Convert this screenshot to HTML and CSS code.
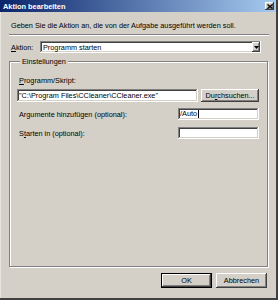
FILE: index.html
```html
<!DOCTYPE html>
<html lang="de">
<head>
    <meta charset="UTF-8">
    <meta name="viewport" content="width=device-width, initial-scale=1.0">
    <title>Aktion bearbeiten</title>
    <link rel="stylesheet" href="styles.css">
</head>
<body>

    <div class="window">
        <div class="titlebar">
            <span class="title">Aktion bearbeiten</span>
            <button class="close" aria-label="Schließen">
                <svg width="6" height="5" viewBox="0 0 6 5">
                    <path d="M0.5 0.5 L5.5 4.5 M5.5 0.5 L0.5 4.5" stroke="#000" stroke-width="1.3" fill="none"/>
                </svg>
            </button>
        </div>

        <div class="content">
            <p class="intro">Geben Sie die Aktion an, die von der Aufgabe ausgeführt werden soll.</p>
            <div class="separator"></div>

            <div class="action-row">
                <label class="action-label"><u>A</u>ktion:</label>
                <div class="combo">
                    <span class="combo-text">Programm starten</span>
                    <span class="drop">
                        <svg width="5" height="3" viewBox="0 0 5 3"><path d="M0 0 H5 L2.5 3 Z" fill="#000"/></svg>
                    </span>
                </div>
            </div>

            <fieldset class="group">
                <legend>Einstellungen</legend>

                <label class="prog-label"><u>P</u>rogramm/Skript:</label>
                <div class="prog-row">
                    <div class="field wide">"C:\Program Files\CCleaner\CCleaner.exe"</div>
                    <button class="btn browse">Du<u>r</u>chsuchen...</button>
                </div>

                <div class="opt-row">
                    <label>Ar<u>g</u>umente hinzufügen (optional):</label>
                    <div class="field narrow">/Auto<span class="caret"></span></div>
                </div>

                <div class="opt-row second">
                    <label>S<u>t</u>arten in (optional):</label>
                    <div class="field narrow"></div>
                </div>
            </fieldset>

            <div class="footer">
                <button class="btn default">OK</button>
                <button class="btn">Abbrechen</button>
            </div>
        </div>
    </div>

</body>
</html>
```

FILE: styles.css
```css
body {
    margin: 0;
    font-family: "Liberation Sans", Arial, sans-serif;
    font-size: 7.3px;
    line-height: 9px;
    color: #000;
    background: #d4d0c8;
}

.window {
    width: 278px;
    height: 300px;
    box-sizing: border-box;
    display: flex;
    flex-direction: column;
    background: #d4d0c8;
    border-right: 2px solid #404040;
    border-bottom: 2px solid #404040;
    box-shadow: inset 1px 0 #e6e4df;
}

/* title bar */
.titlebar {
    height: 12px;
    display: flex;
    align-items: center;
    justify-content: space-between;
    padding: 0 2px 0 3px;
    background: linear-gradient(to right, #0a246a, #a6caf0);
}

.title {
    color: #fff;
    font-weight: bold;
    font-size: 7.4px;
    line-height: 12px;
    padding-top: 1px;
}

.close {
    width: 9px;
    height: 8px;
    padding: 0;
    border: none;
    display: flex;
    align-items: center;
    justify-content: center;
    background: #d4d0c8;
    box-shadow: inset -1px -1px #404040, inset 1px 1px #fff, inset -2px -2px #808080;
}

/* dialog body */
.content {
    flex: 1;
    display: flex;
    flex-direction: column;
    padding: 0 7px 10px 9px;
}

.intro {
    margin: 9px 0 0 2px;
}

.separator {
    margin-top: 4px;
    border-top: 1px solid #808080;
    border-bottom: 1px solid #fff;
}

.action-row {
    margin-top: 5px;
    height: 12px;
    display: flex;
    align-items: center;
}

.action-label {
    width: 29px;
    padding-left: 2px;
}

.combo {
    width: 221px;
    height: 12px;
    box-sizing: border-box;
    display: flex;
    align-items: center;
    justify-content: space-between;
    padding: 0 1px 0 3px;
    background: #fff;
    box-shadow: inset -1px -1px #fff, inset 1px 1px #808080, inset -2px -2px #d4d0c8, inset 2px 2px #404040;
}

.drop {
    width: 8px;
    height: 10px;
    display: flex;
    align-items: center;
    justify-content: center;
    background: #d4d0c8;
    box-shadow: inset -1px -1px #404040, inset 1px 1px #fff, inset -2px -2px #808080;
}

/* group box */
.group {
    flex: 1;
    margin: 4px 0 0 0;
    padding: 10px 8px 0 7px;
    min-width: 0;
    border: 1px solid #808080;
    box-shadow: 1px 1px 0 #fff, inset 1px 1px 0 #fff;
    width: 259px;
    box-sizing: border-box;
}

.group legend {
    margin-left: 3px;
    padding: 0 2px;
    color: #000;
    background: #d4d0c8;
}

.prog-label {
    display: block;
    padding-left: 2px;
}

.prog-row {
    margin-top: 4px;
    display: flex;
    gap: 3px;
}

.field {
    height: 12px;
    box-sizing: border-box;
    padding: 2px 0 0 2px;
    line-height: 8px;
    white-space: nowrap;
    background: #fff;
    box-shadow: inset -1px -1px #fff, inset 1px 1px #808080, inset -2px -2px #d4d0c8, inset 2px 2px #404040;
}

.field.wide {
    width: 182px;
    height: 13px;
    padding-top: 3px;
}

.field.narrow {
    width: 81px;
}

.caret {
    display: inline-block;
    width: 1px;
    height: 8px;
    margin-left: 1px;
    background: #000;
    vertical-align: top;
}

.opt-row {
    margin-top: 6px;
    height: 12px;
    display: flex;
    align-items: center;
    justify-content: space-between;
}

.opt-row label {
    padding-left: 2px;
}

.opt-row.second {
    margin-top: 7px;
}

/* buttons */
.btn {
    font: inherit;
    color: #000;
    padding: 0;
    border: none;
    background: #d4d0c8;
    box-shadow: inset -1px -1px #404040, inset 1px 1px #fff, inset -2px -2px #808080;
}

.browse {
    width: 58px;
    height: 13px;
}

.footer {
    margin-top: 6px;
    padding-right: 2px;
    display: flex;
    justify-content: flex-end;
    gap: 4px;
}

.footer .btn {
    width: 51px;
    height: 15px;
}

.footer .default {
    border: 1px solid #000;
    box-shadow: inset -1px -1px #404040, inset 1px 1px #fff, inset -2px -2px #808080;
}
```
